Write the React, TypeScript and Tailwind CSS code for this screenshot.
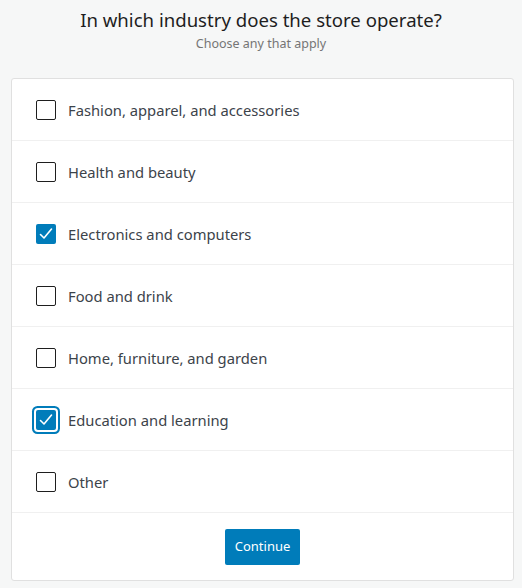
import { useState } from 'react';

const industries = [
  'Fashion, apparel, and accessories',
  'Health and beauty',
  'Electronics and computers',
  'Food and drink',
  'Home, furniture, and garden',
  'Education and learning',
  'Other',
];

function Check() {
  return (
    <svg width="16" height="16" viewBox="0 0 16 16" fill="none">
      <path d="M2.5 8.5l3.5 3.5 7.5-9" stroke="white" strokeWidth="1.6" strokeLinecap="round" strokeLinejoin="round" />
    </svg>
  );
}

export default function App() {
  const [checked, setChecked] = useState<string[]>(['Electronics and computers', 'Education and learning']);
  const focused = 'Education and learning';

  const toggle = (name: string) =>
    setChecked(prev => (prev.includes(name) ? prev.filter(n => n !== name) : [...prev, name]));

  return (
    <div className="min-h-screen bg-[#f6f7f7] px-[11px] pb-[7px] pt-[8px]" style={{ fontFamily: '"Noto Sans", "Open Sans", sans-serif' }}>
      <div className="text-center">
        <h1 className="text-[18.6px] leading-[24px] text-[#1e1e1e]">In which industry does the store operate?</h1>
        <p className="mt-[3px] text-[12.5px] leading-[18px] text-[#757575]">Choose any that apply</p>
      </div>

      {/* Options card */}
      <div className="mt-[25px] w-[503px] rounded-[3px] border border-[#e0e0e0] bg-white">
        {industries.map(name => {
          const on = checked.includes(name);
          return (
            <label key={name} className="flex h-[62px] cursor-pointer items-center border-b border-[#f0f0f0] pl-[24px]">
              <span
                onClick={() => toggle(name)}
                className={`flex h-[20px] w-[20px] items-center justify-center rounded-[2px] ${
                  on ? 'bg-[#007cba]' : 'border-[1.5px] border-[#1e1e1e] bg-white'
                } ${name === focused ? 'shadow-[0_0_0_2px_#fff,0_0_0_4px_#007cba]' : ''}`}
              >
                {on && <Check />}
              </span>
              <span className="ml-[12px] pt-[2px] text-[14.75px] text-[#3c434a]">{name}</span>
            </label>
          );
        })}
        <div className="flex justify-center pb-[15px] pt-[16px]">
          <button className="h-[36px] rounded-[2px] bg-[#007cba] px-[10px] text-[13px] text-white">Continue</button>
        </div>
      </div>
    </div>
  );
}
